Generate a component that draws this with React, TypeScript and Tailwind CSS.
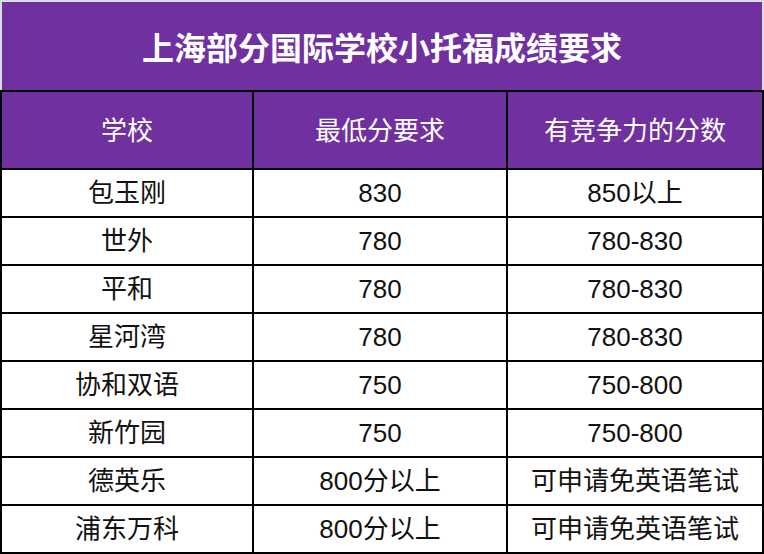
import React from "react";

const rows: [string, string, string][] = [
  ["包玉刚", "830", "850以上"],
  ["世外", "780", "780-830"],
  ["平和", "780", "780-830"],
  ["星河湾", "780", "780-830"],
  ["协和双语", "750", "750-800"],
  ["新竹园", "750", "750-800"],
  ["德英乐", "800分以上", "可申请免英语笔试"],
  ["浦东万科", "800分以上", "可申请免英语笔试"],
];

const font = { fontFamily: '"Liberation Sans", "Noto Sans CJK SC", sans-serif' };

export default function App() {
  return (
    <div className="w-[764px] h-[554px] bg-[#dcdcdc] flex flex-col" style={font}>
      <div className="mt-[2px] mx-[2px] h-[88px] bg-[#7030a0] flex items-center justify-center">
        <span
          className="text-white text-[32px] font-bold leading-none"
          style={{ fontFamily: '"Noto Sans CJK SC", sans-serif' }}
        >
          上海部分国际学校小托福成绩要求
        </span>
      </div>
      <div className="grid grid-cols-[250px_252px_254px] grid-rows-[76px_repeat(8,46px)] gap-[2px] p-[2px] bg-black">
        {["学校", "最低分要求", "有竞争力的分数"].map((h) => (
          <div
            key={h}
            className="bg-[#7030a0] text-white flex items-center justify-center text-[26px] leading-none pt-[2px]"
          >
            {h}
          </div>
        ))}
        {rows.map((r, i) =>
          r.map((c, j) => (
            <div
              key={`${i}-${j}`}
              className="bg-white text-[#111] flex items-center justify-center text-[26px] leading-none"
            >
              {c}
            </div>
          ))
        )}
      </div>
    </div>
  );
}
